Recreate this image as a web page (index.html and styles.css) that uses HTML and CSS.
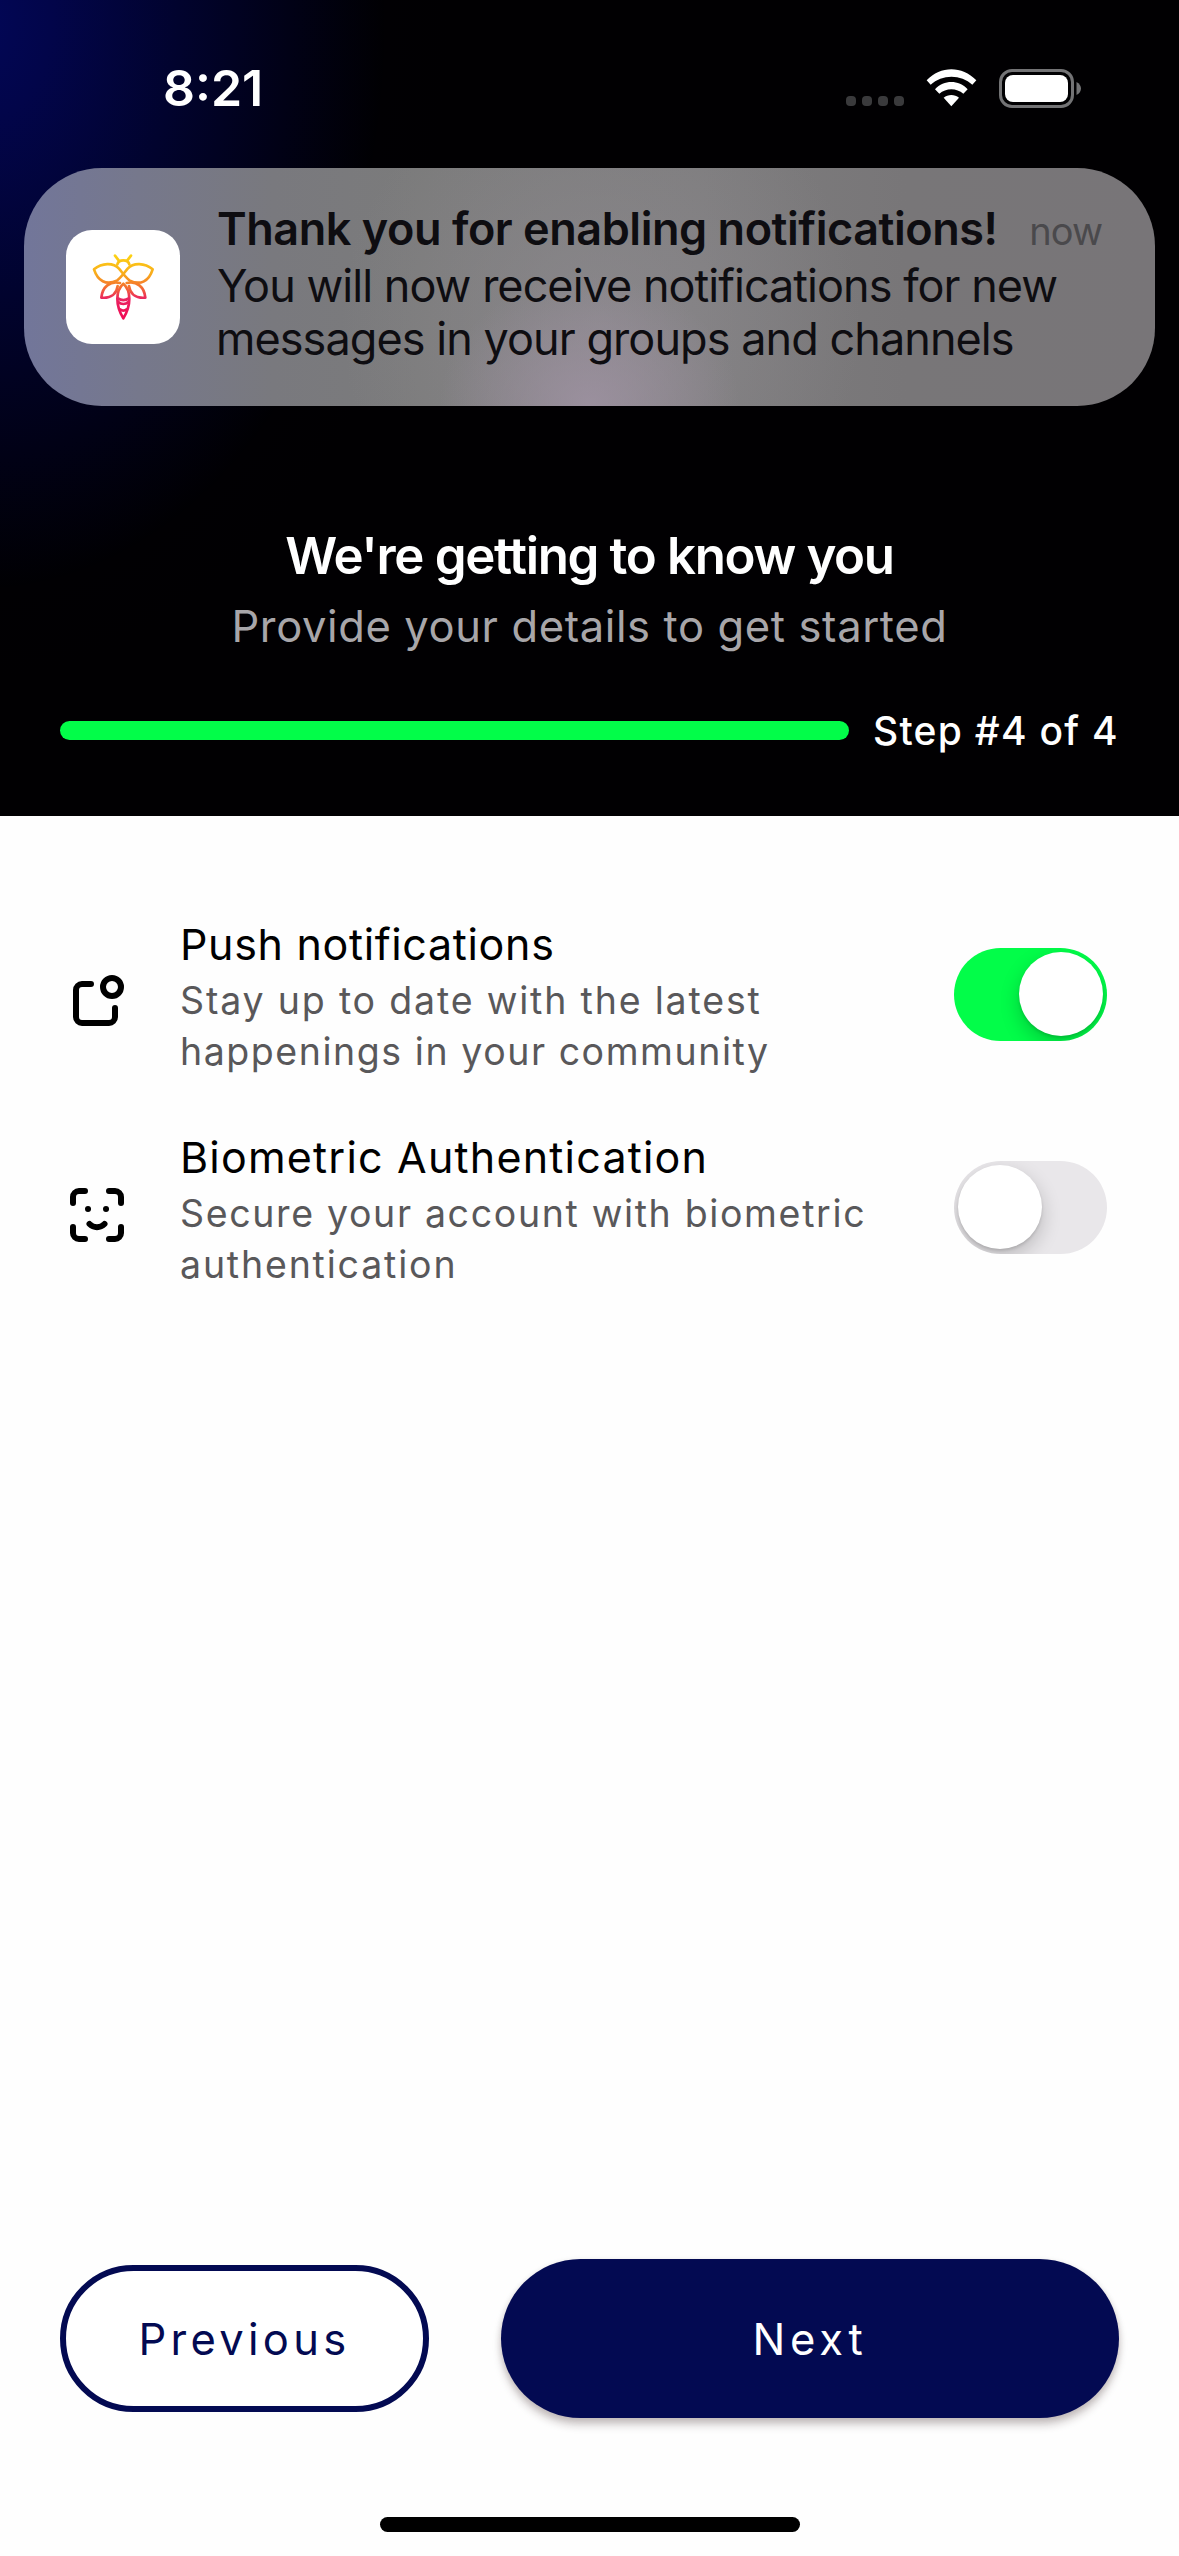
FILE: index.html
```html
<!DOCTYPE html>
<html lang="en">
<head>
<meta charset="utf-8">
<title>Onboarding – Step 4</title>
<link rel="stylesheet" href="styles.css">
</head>
<body>
<div class="screen">
  <header class="hero">
    <div class="status">
      <span class="time">8:21</span>
      <div class="status-icons">
        <div class="dots"><i></i><i></i><i></i><i></i></div>
        <svg class="wifi" viewBox="318 56 153 114" fill="#fff">
          <path d="M320 90C362 46 426 46 469 90L457 103C423 71 366 71 332 103Z"/>
          <path d="M345 117C372 88 416 88 443 117L430 130C410 112 378 112 358 130Z"/>
          <path d="M371 142C384 131 404 131 417 142L394 168Z"/>
        </svg>
        <svg class="battery" viewBox="0 0 82 39">
          <rect x="1.5" y="1.5" width="72" height="36" rx="11.5" fill="none" stroke="#737375" stroke-width="3"/>
          <rect x="6" y="6" width="63" height="27" rx="8" fill="#fff"/>
          <path d="M77.500 13C80.500 14.500 82 17 82 19.500S80.500 24.500 77.500 26Z" fill="#737375"/>
        </svg>
      </div>
    </div>

    <section class="notice">
      <svg class="app-icon" viewBox="48 60 342 342">
        <defs>
          <linearGradient id="bee" gradientUnits="userSpaceOnUse" x1="0" y1="134" x2="0" y2="328">
            <stop offset="0" stop-color="#fdd313"/>
            <stop offset=".3" stop-color="#f8ab1c"/>
            <stop offset=".5" stop-color="#f4702f"/>
            <stop offset=".68" stop-color="#ea2460"/>
            <stop offset="1" stop-color="#f00a55"/>
          </linearGradient>
        </defs>
        <rect x="48" y="60" width="342" height="342" rx="78" fill="#fff"/>
        <g fill="none" stroke="url(#bee)" stroke-width="8" stroke-linecap="round" stroke-linejoin="round">
          <path d="M195 137L206 151M243 137L232 151"/>
          <path d="M202 163C206 147 234 147 238 163"/>
          <path d="M132 178C156 158 190 157 207 176C218 189 226 201 238 211C272 228 297 213 308 178C284 158 250 157 233 176C222 189 214 201 202 211C168 228 143 212 132 178Z"/>
          <path d="M210 219C180 212 157 230 154 263C184 266 200 250 203 228"/>
          <path d="M230 219C260 212 283 230 286 263C256 266 240 250 237 228"/>
          <path d="M220 221C196 242 196 286 220 325C244 286 244 242 220 221Z"/>
          <path d="M204 265C213 272 227 272 236 265M205 276C213 284 227 284 235 276M210 298C216 303 224 303 230 298"/>
        </g>
      </svg>
      <div class="notice-copy">
        <div class="notice-head">
          <strong class="notice-title">Thank you for enabling notifications!</strong>
          <span class="notice-time">now</span>
        </div>
        <p class="line-a">You will now receive notifications for new</p>
        <p class="line-b">messages in your groups and channels</p>
      </div>
    </section>

    <h1>We're getting to know you</h1>
    <p class="sub">Provide your details to get started</p>
    <div class="step">
      <div class="bar"></div>
      <span class="step-label">Step #4 of 4</span>
    </div>
  </header>

  <main class="settings">
    <div class="setting">
      <svg class="icon" viewBox="0 0 24 24">
        <path d="M10 6H7a2 2 0 0 0-2 2v9a2 2 0 0 0 2 2h9a2 2 0 0 0 2-2v-3"/>
        <circle cx="17" cy="7" r="3"/>
      </svg>
      <div class="copy">
        <h2 class="push">Push notifications</h2>
        <p><span class="wide">Stay up to date with the latest</span><br><span class="tight">happenings in your community</span></p>
      </div>
      <div class="toggle on"><span></span></div>
    </div>
    <div class="setting">
      <svg class="icon" viewBox="0 0 24 24">
        <path d="M4 8V6a2 2 0 0 1 2-2h2M4 16v2a2 2 0 0 0 2 2h2M16 4h2a2 2 0 0 1 2 2v2M16 20h2a2 2 0 0 0 2-2v-2M9 10h.01M15 10h.01M9.500 15a3.500 3.500 0 0 0 5 0"/>
      </svg>
      <div class="copy">
        <h2 class="bio">Biometric Authentication</h2>
        <p>Secure your account with biometric<br><span class="wide">authentication</span></p>
      </div>
      <div class="toggle"><span></span></div>
    </div>
  </main>

  <footer class="actions">
    <button class="prev">Previous</button>
    <button class="next">Next</button>
  </footer>
  <div class="home"></div>
</div>
</body>
</html>
```
FILE: styles.css
```css
* { box-sizing: border-box; }
body {
  margin: 0;
  background: #fefefe;
  font-family: Inter, "Liberation Sans", sans-serif;
  color: #000;
}
h1, h2, p { margin: 0; font-weight: 400; white-space: nowrap; }
svg { display: block; flex: none; }

.screen {
  width: 1179px;
  height: 2556px;
  display: flex;
  flex-direction: column;
  overflow: hidden;
}

/* Dark header */
.hero {
  height: 816px;
  flex: none;
  display: flex;
  flex-direction: column;
  background:
    radial-gradient(ellipse 470px 660px at -20px 20px, #020757 0%, #02054a 15%, #01032e 42%, #010116 66%, rgba(0, 0, 4, .5) 86%, transparent 100%),
    #010002;
}
.status {
  height: 168px;
  padding: 58px 98px 0 163px;
  display: flex;
  justify-content: space-between;
  align-items: flex-start;
}
.time {
  font-size: 50px;
  line-height: 60px;
  font-weight: 600;
  letter-spacing: 0;
  color: #fff;
}
.status-icons {
  height: 60px;
  display: flex;
  align-items: center;
  gap: 22px;
}
.dots { display: flex; gap: 6px; padding-top: 25px; }
.dots i { width: 10px; height: 10px; border-radius: 4px; background: #3a3a3c; }
.wifi { width: 51px; height: 38px; }
.battery { width: 82px; height: 39px; }

/* Notification banner */
.notice {
  height: 238px;
  margin: 0 24px;
  padding-left: 42px;
  display: flex;
  align-items: center;
  gap: 37px;
  border-radius: 78px;
  color: #0e0d11;
  background:
    radial-gradient(ellipse 150px 130px at 50% 100%, rgba(162, 148, 166, .75), transparent),
    radial-gradient(ellipse 260px 260px at 51% 65%, rgba(146, 142, 148, .6), transparent),
    linear-gradient(90deg, #72769a 0%, #76788c 10%, #79797e 22%, #7b7b7b 35%, #7d7c7d 60%, #787678 78%, #787578 100%);
}
.app-icon { width: 114px; height: 114px; }
.notice-copy {
  flex: 1;
  padding: 0 53px 6px 0;
  font-size: 45px;
  line-height: 53.4px;
}
.notice-head { display: flex; justify-content: space-between; align-items: baseline; }
.notice-title { font-weight: 600; letter-spacing: -.46px; white-space: nowrap; }
.notice-time { font-size: 38px; letter-spacing: -1px; color: #4a494c; }
.line-a { letter-spacing: -.97px; }
.line-b { letter-spacing: -.94px; margin-left: -1px; }

h1 {
  margin-top: 120px;
  font-size: 51px;
  line-height: 60px;
  font-weight: 600;
  letter-spacing: -1.35px;
  text-align: center;
  color: #fff;
}
.sub {
  margin-top: 12px;
  font-size: 43.5px;
  line-height: 56px;
  letter-spacing: .62px;
  text-align: center;
  color: #a8a6a9;
}
.step {
  margin: 52px 60px 0;
  height: 48px;
  display: flex;
  align-items: center;
  gap: 24px;
}
.bar { width: 789px; height: 19px; border-radius: 10px; background: #02fd49; }
.step-label {
  padding-top: 2px;
  font-size: 39px;
  line-height: 48px;
  font-weight: 500;
  letter-spacing: 1.25px;
  color: #fff;
  white-space: nowrap;
}

/* Settings list */
.settings {
  flex: 1;
  padding: 100px 72px 0 61px;
  display: flex;
  flex-direction: column;
  gap: 52px;
}
.setting { height: 161px; display: flex; align-items: center; }
.icon {
  width: 72px;
  height: 72px;
  margin-top: 10px;
  fill: none;
  stroke: #000;
  stroke-width: 2;
  stroke-linecap: round;
  stroke-linejoin: round;
}
.copy { flex: 1; padding-left: 47px; }
.copy h2 { font-size: 43px; line-height: 56px; }
.push { letter-spacing: .66px; }
.bio { letter-spacing: 1.2px; }
.copy p {
  margin-top: 3px;
  font-size: 37.5px;
  line-height: 51px;
  letter-spacing: 1.65px;
  color: #59585a;
}
.wide { letter-spacing: 1.82px; }
.tight { letter-spacing: 1.55px; }
.toggle {
  width: 153px;
  height: 93px;
  margin-top: -4px;
  padding: 4px;
  display: flex;
  border-radius: 47px;
  background: #e9e7ea;
  overflow: hidden;
}
.toggle.on { justify-content: flex-end; background: #02fd49; }
.toggle span {
  width: 84px;
  height: 84px;
  border-radius: 50%;
  background: #fff;
  box-shadow: 0 8px 20px rgba(0, 0, 0, .2), 0 2px 3px rgba(0, 0, 0, .12);
}

/* Bottom actions */
.actions {
  margin: 0 60px;
  height: 159px;
  display: flex;
  align-items: center;
  justify-content: space-between;
}
button {
  padding: 0;
  border: 0;
  font: 400 43.500px/56px Inter, "Liberation Sans", sans-serif;
}
.prev {
  width: 369px;
  height: 147px;
  border: 6px solid #030a52;
  border-radius: 74px;
  background: #fff;
  color: #030a52;
  letter-spacing: 4.3px;
}
.next {
  width: 618px;
  height: 159px;
  border-radius: 80px;
  background: #030a52;
  color: #fff;
  letter-spacing: 4.8px;
  box-shadow: 0 7px 8px rgba(40, 20, 20, .22), 0 2px 6px rgba(40, 20, 20, .12);
}
.home {
  width: 420px;
  height: 15px;
  margin: 99px auto 24px;
  flex: none;
  border-radius: 8px;
  background: #000;
}
```
